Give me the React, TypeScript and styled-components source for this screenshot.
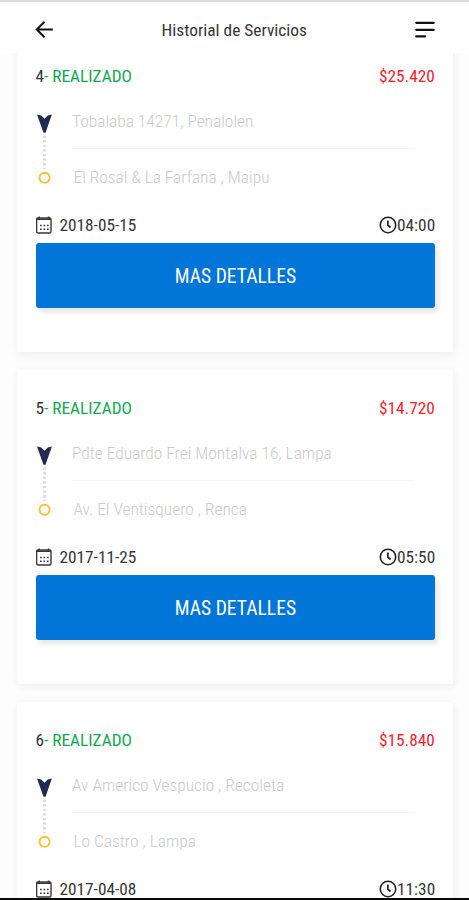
import React from "react";
import styled, { createGlobalStyle } from "styled-components";

const GlobalStyle = createGlobalStyle`
  * { box-sizing: border-box; }
  body {
    margin: 0;
    background: #fdfdfd;
    overflow: hidden;
    font-family: "Roboto Condensed", Roboto, sans-serif;
    font-stretch: 75%;
  }
`;

const Screen = styled.div`
  display: flex;
  flex-direction: column;
  height: 900px;
  overflow: hidden;
  border-top: 2px solid #dcdcdc;
  border-bottom: 2px solid #080808;
`;

const Header = styled.header`
  display: flex;
  align-items: center;
  justify-content: space-between;
  flex: none;
  height: 51px;
  padding: 4px 34px 0 34px;
  background: #fff;
  z-index: 1;
`;

const Line = styled.span<{ $w: number; $size?: number; $color?: string; $weight?: number }>`
  display: block;
  width: ${(p) => p.$w}px;
  font-size: ${(p) => p.$size ?? 17.3}px;
  line-height: 20px;
  font-weight: ${(p) => p.$weight ?? 370};
  color: ${(p) => p.$color ?? "#363636"};
  white-space: nowrap;
`;

const List = styled.main`
  display: flex;
  flex-direction: column;
  gap: 18px;
  flex: 1;
  min-height: 0;
  overflow: hidden;
  padding: 0 16px 0 17px;
`;

const Card = styled.article`
  flex: none;
  height: 314px;
  padding: 28px 18px 0 18.5px;
  background: #fff;
  box-shadow: 1px 2px 9px rgba(0, 0, 0, 0.07);
  &:first-child { margin-top: -15px; }
`;

const Row = styled.div`
  display: flex;
  justify-content: space-between;
  align-items: center;
  height: 20px;
`;

const Group = styled.div<{ $gap?: number }>`
  display: flex;
  align-items: center;
  gap: ${(p) => p.$gap ?? 0}px;
`;

const Route = styled.div`
  display: flex;
  height: 129px;
  padding-top: 25px;
`;

const Stops = styled.div`
  flex: none;
  width: 342px;
  margin-left: 18.5px;
`;

const Stop = styled.div<{ $last?: boolean }>`
  height: ${(p) => (p.$last ? 56 : 38)}px;
  padding: ${(p) => (p.$last ? "18px 0 0 1.5px" : "0")};
  border-bottom: ${(p) => (p.$last ? "0" : "1px solid #f4f4f4")};
`;

const Button = styled.button`
  display: flex;
  align-items: center;
  justify-content: center;
  width: 100%;
  height: 65px;
  margin: 8px 0 0;
  padding: 2px 0 0;
  border: 0;
  border-radius: 3px;
  background: #0275d8;
  font-family: inherit;
  font-stretch: inherit;
  box-shadow: 3px 4px 5px rgba(0, 0, 0, 0.1);
`;

const BackIcon = () => (
  <svg width="21" height="20" viewBox="0 0 21 20" fill="none" stroke="#111" strokeWidth="2">
    <path d="M10.5 1.7 2.8 9.5l7.7 7.7M3 9.5h15.8" />
  </svg>
);

const MenuIcon = () => (
  <svg width="20" height="18" viewBox="0 0 20 18" fill="none" stroke="#111" strokeWidth="2.3" strokeLinecap="round">
    <path d="M1.3 1.8h17.4M1.3 8.8h17.4M1.3 15.4h8.6" />
  </svg>
);

const RouteIcon = () => (
  <svg width="18" height="74" viewBox="0 0 18 74" fill="none">
    <path d="M1 3.6 5.2 4.6 8.5 7.8 11.8 4.6 15.9 3.6 9.5 21.8H7.5Z" fill="#1f2b50" />
    <path d="M8.5 24.5v33.5" stroke="#d9d9de" strokeWidth="2.8" strokeDasharray="2.3 2.3" />
    <circle cx="8.6" cy="66.8" r="5.1" stroke="#fbc02d" strokeWidth="1.9" />
  </svg>
);

const CalendarIcon = () => (
  <svg width="17" height="18" viewBox="0 0 17 18" fill="none" stroke="#383838">
    <rect x="0.6" y="2" width="14.4" height="15" rx="1.5" strokeWidth="1.4" />
    <path d="M0.6 3.2h14.4M3.2 0.6v3M12.6 0.6v3" strokeWidth="1.5" />
    <path d="M4 9.6h8.6M4 13.2h8.6" strokeWidth="1.5" strokeDasharray="1.6 1.9" />
  </svg>
);

const ClockIcon = () => (
  <svg width="18" height="18" viewBox="0 0 18 18" fill="none" stroke="#222">
    <circle cx="9" cy="9" r="7.7" strokeWidth="1.6" />
    <path d="M8.9 4.5v4.7l2.6 2.3" strokeWidth="1.7" />
  </svg>
);

type Service = {
  id: number; price: string; from: string; to: string; date: string; time: string; details?: boolean;
};

const services: Service[] = [
  { id: 4, price: "$25.420", from: "Tobalaba 14271, Penalolen", to: "El Rosal & La Farfana , Maipu", date: "2018-05-15", time: "04:00", details: true },
  { id: 5, price: "$14.720", from: "Pdte Eduardo Frei Montalva 16, Lampa", to: "Av. El Ventisquero , Renca", date: "2017-11-25", time: "05:50", details: true },
  { id: 6, price: "$15.840", from: "Av Americo Vespucio , Recoleta", to: "Lo Castro , Lampa", date: "2017-04-08", time: "11:30" },
];

const Status = styled.span`
  color: #12a84f;
`;

export default function App() {
  return (
    <>
      <GlobalStyle />
      <Screen>
        <Header>
          <BackIcon />
          <Line $w={147} $size={17.4}>Historial de Servicios</Line>
          <MenuIcon />
        </Header>
        <List>
          {services.map((s) => (
            <Card key={s.id}>
              <Row>
                <Line $w={97}>{s.id}<Status>- REALIZADO</Status></Line>
                <Line $w={56} $color="#f8232a">{s.price}</Line>
              </Row>
              <Route>
                <RouteIcon />
                <Stops>
                  <Stop><Line $w={260} $size={17.4} $color="#cacaca" $weight={300}>{s.from}</Line></Stop>
                  <Stop $last><Line $w={260} $size={17.4} $color="#cacaca" $weight={300}>{s.to}</Line></Stop>
                </Stops>
              </Route>
              <Row>
                <Group $gap={7}><CalendarIcon /><Line $w={78}>{s.date}</Line></Group>
                <Group><ClockIcon /><Line $w={38}>{s.time}</Line></Group>
              </Row>
              {s.details && (
                <Button><Line $w={121} $size={19.6} $weight={400} $color="#fff">MAS DETALLES</Line></Button>
              )}
            </Card>
          ))}
        </List>
      </Screen>
    </>
  );
}
